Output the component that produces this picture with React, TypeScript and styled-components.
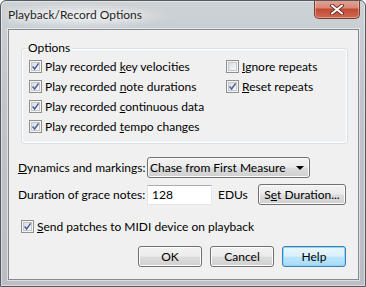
import * as React from "react"
import styled, { createGlobalStyle, css } from "styled-components"

const GlobalStyle = createGlobalStyle`
  html, body {
    margin: 0;
    padding: 0;
    background: #ffffff;
  }
  body {
    font-family: Lato, "Noto Sans", sans-serif;
    font-size: 12px;
    color: #000;
  }
`

const Window = styled.div`
  width: 366px;
  height: 287px;
  box-sizing: border-box;
  border: 1px solid #54595f;
  border-radius: 6px 6px 0 0;
  background: linear-gradient(180deg, #cdd2d6 0%, #bfc5ca 35%, #b8bec4 100%);
  box-shadow: inset 0 0 0 1px rgba(255, 255, 255, 0.45);
  padding: 0 6px 6px 7px;
  display: flex;
  flex-direction: column;
  overflow: hidden;
`

const TitleBar = styled.div`
  height: 28px;
  display: flex;
  align-items: flex-start;
  background: radial-gradient(
    ellipse 95px 13px at 70px 15px,
    rgba(255, 255, 255, 0.7),
    rgba(255, 255, 255, 0)
  );
`

const Title = styled.div`
  flex: 1;
  margin-top: 6px;
  line-height: 16px;
  white-space: nowrap;
  color: #1e1e1e;
  text-shadow: 0 0 6px rgba(255, 255, 255, 0.9);
`

const CloseButton = styled.div`
  width: 46px;
  height: 19px;
  margin: -1px -1px 0 0;
  box-sizing: border-box;
  border: 1px solid #7a3a30;
  border-top: none;
  border-radius: 0 0 5px 5px;
  background: linear-gradient(180deg, #e5a595 0%, #d8897a 42%, #c44a34 52%, #cf6a50 100%);
  box-shadow: inset 0 0 0 1px rgba(255, 255, 255, 0.35);
  display: flex;
  align-items: center;
  justify-content: center;
`

const Client = styled.div`
  flex: 1;
  border: 1px solid #868a8f;
  background: #f0f0f0;
  box-shadow: 0 0 0 1px rgba(255, 255, 255, 0.5);
  display: flex;
  flex-direction: column;
`

const Group = styled.fieldset`
  margin: 10px 10px 0 12px;
  padding: 0 7px 7px 7px;
  border: 1px solid #d5dfe5;
  border-radius: 3px;
  box-shadow: inset 0 0 0 1px #ffffff;
  min-inline-size: 0;

  legend {
    padding: 0 2px;
    margin-left: -3px;
    line-height: 16px;
  }
`

const OptionsGrid = styled.div`
  display: grid;
  grid-template-columns: 197px 1fr;
`

const Column = styled.div`
  display: flex;
  flex-direction: column;
`

const CheckRow = styled.div<{ $indent?: number }>`
  display: flex;
  align-items: center;
  gap: 3px;
  height: 20px;
  white-space: nowrap;
  margin-left: ${(p) => p.$indent || 0}px;
`

const Box = styled.span`
  width: 13px;
  height: 13px;
  box-sizing: border-box;
  border: 1px solid #8e8f8f;
  background: #f4f4f4;
  padding: 1px;
  flex: none;
  position: relative;

  > i {
    display: block;
    width: 9px;
    height: 9px;
    box-sizing: border-box;
    border: 1px solid #c4c8cc;
    background: linear-gradient(135deg, #d8dbdf 0%, #eceef0 60%, #fbfbfb 100%);
  }
  > svg {
    position: absolute;
    left: 1px;
    top: 1px;
  }
`

const FieldRow = styled.div<{ $top: number }>`
  display: flex;
  align-items: center;
  padding-left: 9px;
  margin-top: ${(p) => p.$top}px;
  white-space: nowrap;
`

const FieldLabel = styled.span`
  width: 129px;
`

const winButton = css`
  box-sizing: border-box;
  height: 21px;
  border: 1px solid #707070;
  border-radius: 3px;
  background: linear-gradient(180deg, #f2f2f2 0%, #ebebeb 49%, #dddddd 51%, #cfcfcf 100%);
  box-shadow: inset 0 0 0 1px #fcfcfc;
  font: inherit;
  color: #000;
`

const Combo = styled.div`
  ${winButton}
  width: 163px;
  display: flex;
  align-items: center;
  justify-content: space-between;
  padding-left: 2px;
`

const Arrow = styled.span`
  width: 0;
  height: 0;
  border-top: 4px solid #000;
  border-left: 4px solid transparent;
  border-right: 4px solid transparent;
  margin-right: 5px;
`

const TextBox = styled.div`
  box-sizing: border-box;
  width: 65px;
  height: 20px;
  background: #fff;
  border: 1px solid #e3e9ef;
  border-top-color: #abadb3;
  border-left-color: #e2e3ea;
  display: flex;
  align-items: center;
  padding-left: 4px;
`

const Unit = styled.span`
  width: 40px;
  margin-left: 6px;
`

const PushButton = styled.button<{ $width: number; $default?: boolean }>`
  ${winButton}
  width: ${(p) => p.$width}px;
  padding: 0;
  ${(p) =>
    p.$default &&
    css`
      border-color: #3c7fb1;
      background: linear-gradient(180deg, #eaf6fd 0%, #d9f0fc 49%, #bee6fd 51%, #a7d9f5 100%);
      box-shadow: inset 0 0 0 1px #8fd6f8;
    `}
`

const ButtonBar = styled.div`
  display: flex;
  justify-content: flex-end;
  gap: 8px;
  margin: 10px 12px 0 0;
`

const CheckMark = () => (
  <svg width="9" height="9" viewBox="0 0 9 9">
    <path d="M1.6 4.6 L3.6 7 L7.6 1.4" fill="none" stroke="#4a5f99" strokeWidth="1.5" />
  </svg>
)

const Check = ({ checked, children, indent }: { checked?: boolean; children: React.ReactNode; indent?: number }) => (
  <CheckRow $indent={indent}>
    <Box>
      <i />
      {checked && <CheckMark />}
    </Box>
    <span>{children}</span>
  </CheckRow>
)

const App = () => {
  return (
    <>
      <GlobalStyle />
      <Window>
        <TitleBar>
          <Title>Playback/Record Options</Title>
          <CloseButton>
            <svg width="14" height="11" viewBox="0 0 14 11">
              <path d="M2 1.5 L12 9.5 M12 1.5 L2 9.5" stroke="#6a2a20" strokeWidth="3.8" strokeLinecap="round" />
              <path d="M2 1.5 L12 9.5 M12 1.5 L2 9.5" stroke="#ffffff" strokeWidth="2.1" strokeLinecap="round" />
            </svg>
          </CloseButton>
        </TitleBar>
        <Client>
          <Group>
            <legend>Options</legend>
            <OptionsGrid>
              <Column>
                <Check checked>
                  Play recorded <u>k</u>ey velocities
                </Check>
                <Check checked>
                  Play recorded <u>n</u>ote durations
                </Check>
                <Check checked>
                  Play recorded <u>c</u>ontinuous data
                </Check>
                <Check checked>
                  Play recorded <u>t</u>empo changes
                </Check>
              </Column>
              <Column>
                <Check>
                  <u>I</u>gnore repeats
                </Check>
                <Check checked>
                  <u>R</u>eset repeats
                </Check>
              </Column>
            </OptionsGrid>
          </Group>
          <FieldRow $top={13}>
            <FieldLabel>
              <u>D</u>ynamics and markings:
            </FieldLabel>
            <Combo>
              <span>Chase from First Measure</span>
              <Arrow />
            </Combo>
          </FieldRow>
          <FieldRow $top={6}>
            <FieldLabel>
              Duration of <u>g</u>race notes:
            </FieldLabel>
            <TextBox>128</TextBox>
            <Unit>EDUs</Unit>
            <PushButton $width={88}>
              S<u>e</u>t Duration...
            </PushButton>
          </FieldRow>
          <FieldRow $top={11}>
            <Check checked indent={3}>
              <u>S</u>end patches to MIDI device on playback
            </Check>
          </FieldRow>
          <ButtonBar>
            <PushButton $width={64}>OK</PushButton>
            <PushButton $width={64}>Cancel</PushButton>
            <PushButton $width={64} $default>
              Help
            </PushButton>
          </ButtonBar>
        </Client>
      </Window>
    </>
  )
}

export default App
